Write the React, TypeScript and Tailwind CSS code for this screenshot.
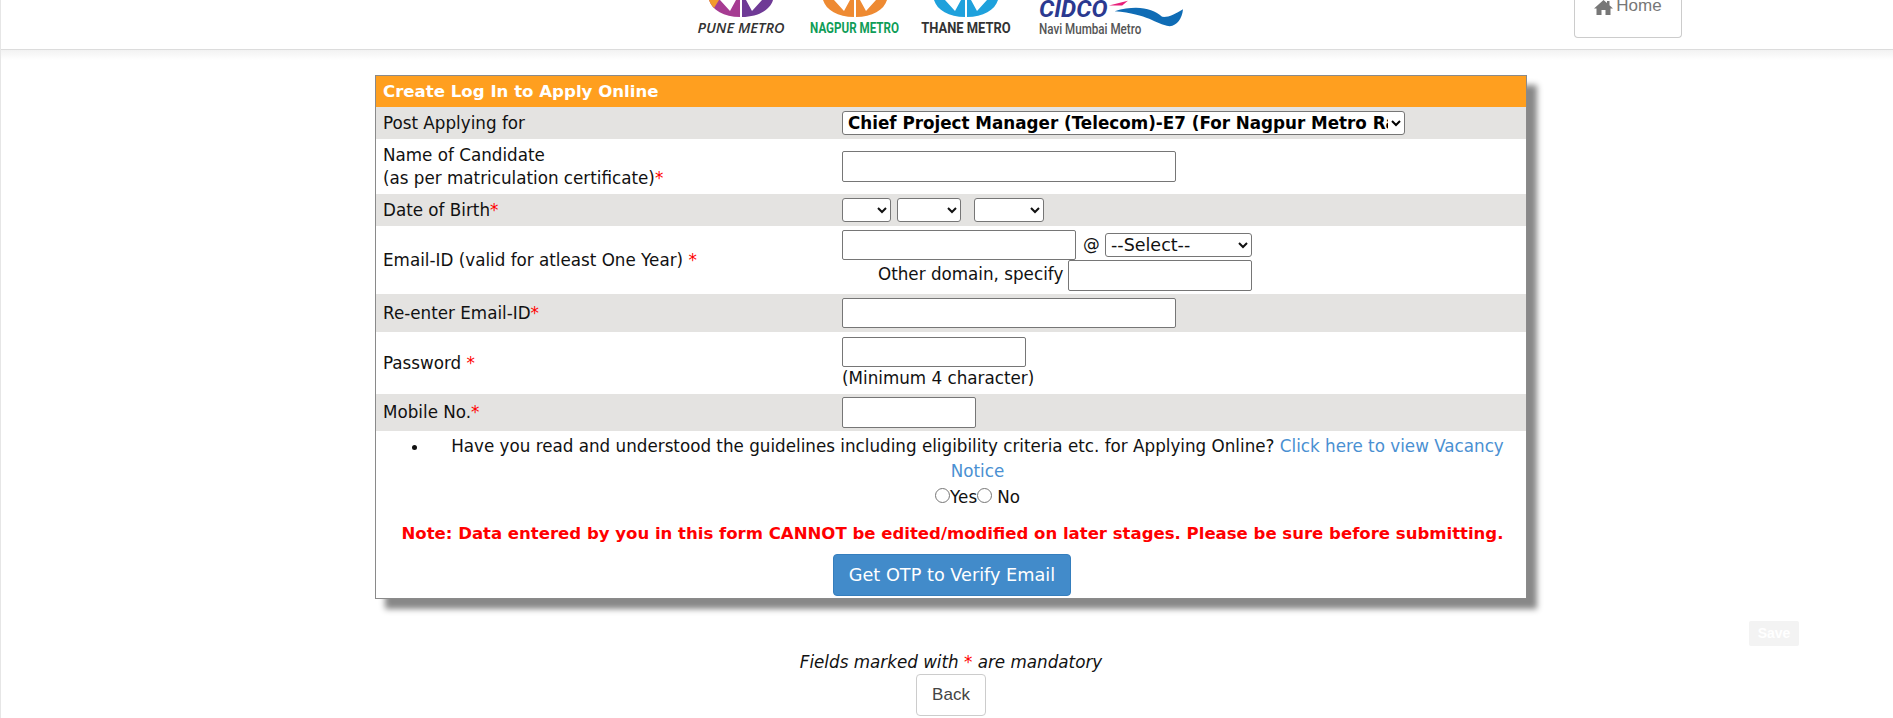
const verdana = "font-['DejaVu_Sans','Liberation_Sans',sans-serif]";

const Star = () => <span className="text-[#ff0000]">*</span>;

const ArcLogo = ({ left, right, top }: { left: string; right: string; top?: string }) => (
  <svg viewBox="0 0 64 17" className="h-[17px] w-[64px]">
    <path d="M0 0C3 10 15 17 31 17V0H27L21 11L11 0Z" fill={left} />
    <path d="M64 0C61 10 49 17 33 17V0H37L43 11L53 0Z" fill={right} />
    {top && <path d="M0 0C1 3 3 6 5 8L10 0Z" fill={top} />}
  </svg>
);

const Logos = () => (
  <div className="ml-[695px] flex h-[50px] shrink-0 items-start">
    <div className="flex w-[90px] flex-col items-center">
      <ArcLogo left="#a63c92" right="#6f3a96" top="#f39a2d" />
      <span className="mt-[3px] whitespace-nowrap font-['Open_Sans',sans-serif] text-[14.5px] leading-[16px] font-semibold text-[#333] italic">
        PUNE METRO
      </span>
    </div>
    <div className="ml-[25px] flex w-[88px] flex-col items-center">
      <ArcLogo left="#ee8a32" right="#ee8a32" />
      <span className="mt-[3px] scale-x-[0.83] whitespace-nowrap font-['Roboto',sans-serif] text-[14px] leading-[16px] font-bold text-[#0f9d58]">
        NAGPUR METRO
      </span>
    </div>
    <div className="ml-[22px] flex w-[90px] flex-col items-center">
      <ArcLogo left="#1ea1dc" right="#1ea1dc" />
      <span className="mt-[3px] scale-x-[0.86] whitespace-nowrap font-['Roboto',sans-serif] text-[15px] leading-[16px] font-bold text-[#333]">
        THANE METRO
      </span>
    </div>
    <div className="ml-[28px] flex w-[145px] flex-col">
      <div className="flex h-[18px] items-end">
        <span className="font-['Roboto',sans-serif] text-[24px] leading-[18px] font-bold text-[#2b3990] italic">
          CIDCO
        </span>
        <svg viewBox="0 0 80 27" className="h-[27px] w-[76px] translate-y-[9px] self-end">
          <path d="M2 5L22 0L16 5Z" fill="#e8207a" />
          <path d="M8 11C32 4 48 8 58 17C64 18 72 14 80 9C79 19 74 26 66 27C50 24 44 14 8 11Z" fill="#0f6cb5" />
        </svg>
      </div>
      <span className="mt-[3px] origin-left scale-x-[0.83] whitespace-nowrap font-['Roboto',sans-serif] text-[14px] leading-[16px] font-medium text-[#555]">
        Navi Mumbai Metro
      </span>
    </div>
  </div>
);

const Navbar = () => (
  <header className="flex h-[50px] items-start overflow-hidden border-b border-[#dcdcdc] bg-white">
    <Logos />
    <div className="ml-[390px] flex h-[38px] w-[108px] justify-center rounded-b-[4px] border border-t-0 border-[#cccccc] font-['Liberation_Sans',sans-serif] text-[17px] leading-[12px] text-[#777]">
      <span className="flex items-start gap-[3px]">
        <svg viewBox="0 0 19 15" className="h-[15px] w-[19px]" fill="#777">
          <path d="M9.5 0L13 3V1H15.5V5.2L19 8.5H16.5V15H11.5V10H7.5V15H2.5V8.5H0Z" />
        </svg>
        Home
      </span>
    </div>
  </header>
);

const inputClass = "rounded-[2px] border border-[#767676] bg-white";
const selectClass = "h-[24px] rounded-[3px] border border-[#767676] bg-white";

const Row = ({
  label,
  height,
  shaded,
  children,
}: {
  label: React.ReactNode;
  height: string;
  shaded?: boolean;
  children: React.ReactNode;
}) => (
  <div className={`flex items-center ${height} ${shaded ? "bg-[#e4e3e1]" : "bg-white"}`}>
    <div className="w-[466px] shrink-0 pl-[7px] leading-[23px]">{label}</div>
    <div className="flex-1">{children}</div>
  </div>
);

const LoginForm = () => (
  <section className="ml-[374px] w-[1152px] border border-[#8a8a8a] bg-white text-[16.75px] text-[#111] shadow-[10px_10px_6px_#888888]">
    <div className="flex h-[31px] items-center bg-[#ff9f1f] pt-[2px] pl-[7px] text-[16.6px] font-bold text-white">
      Create Log In to Apply Online
    </div>
    <Row label="Post Applying for" height="h-[32px]" shaded>
      <select className={`${selectClass} block w-[563px] pl-[1px] text-[16.75px] font-bold text-black`} defaultValue="cpm">
        <option value="cpm">Chief Project Manager (Telecom)-E7 (For Nagpur Metro Rail Project)</option>
      </select>
    </Row>
    <Row
      label={
        <>
          Name of Candidate
          <br />
          (as per matriculation certificate)
          <Star />
        </>
      }
      height="h-[55px]"
    >
      <input type="text" className={`${inputClass} block h-[31px] w-[334px]`} />
    </Row>
    <Row
      label={
        <>
          Date of Birth
          <Star />
        </>
      }
      height="h-[32px]"
      shaded
    >
      <div className="flex">
        <select className={`${selectClass} w-[49px]`} />
        <select className={`${selectClass} ml-[6px] w-[64px]`} />
        <select className={`${selectClass} ml-[13px] w-[70px]`} />
      </div>
    </Row>
    <Row
      label={
        <>
          Email-ID (valid for atleast One Year) <Star />
        </>
      }
      height="h-[68px]"
    >
      <div className="flex items-center">
        <input type="text" className={`${inputClass} h-[30px] w-[234px]`} />
        <span className="ml-[7px] w-[22px]">@</span>
        <select className={`${selectClass} w-[147px] pl-[1px] text-[17.5px]`} defaultValue="">
          <option value="">--Select--</option>
        </select>
      </div>
      <div className="flex items-center pl-[36px]">
        <span>Other domain, specify</span>
        <input type="text" className={`${inputClass} ml-[5px] h-[31px] w-[184px]`} />
      </div>
    </Row>
    <Row
      label={
        <>
          Re-enter Email-ID
          <Star />
        </>
      }
      height="h-[38px]"
      shaded
    >
      <input type="text" className={`${inputClass} block h-[30px] w-[334px]`} />
    </Row>
    <Row
      label={
        <>
          Password <Star />
        </>
      }
      height="h-[62px]"
    >
      <input type="password" className={`${inputClass} block h-[30px] w-[184px]`} />
      <div className="leading-[22px]">(Minimum 4 character)</div>
    </Row>
    <Row
      label={
        <>
          Mobile No.
          <Star />
        </>
      }
      height="h-[37px]"
      shaded
    >
      <input type="text" className={`${inputClass} block h-[31px] w-[134px]`} />
    </Row>

    <div className="flex h-[167px] flex-col items-center pt-[3px]">
      <ul className="w-full list-disc pl-[53px] text-center leading-[25px]">
        <li>
          Have you read and understood the guidelines including eligibility criteria etc. for Applying Online?{" "}
          <a className="text-[#4a90d2]">Click here to view Vacancy Notice</a>
          <div className="flex items-center justify-center leading-[27px]">
            <input type="radio" name="read" className="mb-[4px] h-[15px] w-[15px]" />
            <span>Yes</span>
            <input type="radio" name="read" className="mb-[4px] h-[15px] w-[15px]" />
            <span className="ml-[5px]">No</span>
          </div>
        </li>
      </ul>
      <p className="mt-[10px] ml-[3px] text-[16.55px] leading-[25px] font-bold text-[#ff0000]">
        Note: Data entered by you in this form CANNOT be edited/modified on later stages. Please be sure before submitting.
      </p>
      <button className="mt-[8px] ml-[2px] h-[42px] w-[238px] rounded-[4px] border border-[#357ebd] bg-[#428bca] text-[17.7px] text-white">
        Get OTP to Verify Email
      </button>
    </div>
  </section>
);

export default function App() {
  return (
    <div className={`min-h-[718px] border-l border-[#e6e6e6] bg-white ${verdana}`}>
      <Navbar />
      <div className="h-[25px] bg-gradient-to-b from-[#f2f2f2] to-white to-40%" />
      <LoginForm />
      <div className="mt-[22px] flex justify-end pr-[94px]">
        <button className="h-[25px] w-[50px] rounded-[2px] bg-[#f3f3f3] font-['Liberation_Sans',sans-serif] text-[14px] font-bold text-white">
          Save
        </button>
      </div>
      <div className="flex flex-col items-center pl-[8px]">
        <p className="mt-[5px] text-[16.75px] leading-[22px] text-[#111] italic">
          Fields marked with <Star /> are mandatory
        </p>
        <button className="mt-[1px] h-[42px] w-[70px] rounded-[4px] border border-[#cccccc] bg-white font-['Liberation_Sans',sans-serif] text-[17px] text-[#444]">
          Back
        </button>
      </div>
    </div>
  );
}
